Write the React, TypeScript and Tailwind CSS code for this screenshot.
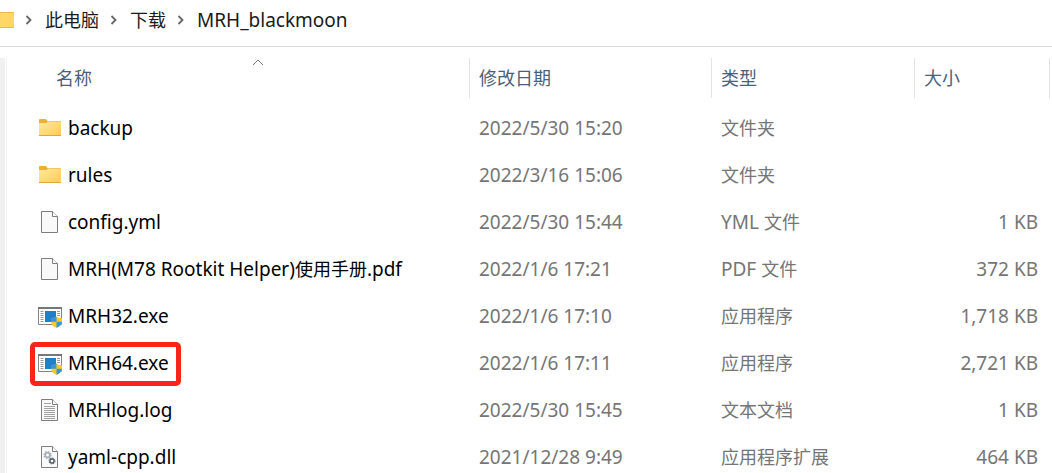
import { clsx } from "clsx"

type FileKind = "folder" | "file" | "app" | "text" | "dll"

interface FileEntry {
  name: string
  kind: FileKind
  modified: string
  type: string
  size?: string
  marked?: boolean
}

const breadcrumbs = ["此电脑", "下载", "MRH_blackmoon"]

const files: FileEntry[] = [
  { name: "backup", kind: "folder", modified: "2022/5/30 15:20", type: "文件夹" },
  { name: "rules", kind: "folder", modified: "2022/3/16 15:06", type: "文件夹" },
  { name: "config.yml", kind: "file", modified: "2022/5/30 15:44", type: "YML 文件", size: "1 KB" },
  { name: "MRH(M78 Rootkit Helper)使用手册.pdf", kind: "file", modified: "2022/1/6 17:21", type: "PDF 文件", size: "372 KB" },
  { name: "MRH32.exe", kind: "app", modified: "2022/1/6 17:10", type: "应用程序", size: "1,718 KB" },
  { name: "MRH64.exe", kind: "app", modified: "2022/1/6 17:11", type: "应用程序", size: "2,721 KB", marked: true },
  { name: "MRHlog.log", kind: "text", modified: "2022/5/30 15:45", type: "文本文档", size: "1 KB" },
  { name: "yaml-cpp.dll", kind: "dll", modified: "2021/12/28 9:49", type: "应用程序扩展", size: "464 KB" },
]

const columns = [
  { label: "名称", width: "", padding: "pl-12" },
  { label: "修改日期", width: "w-[242px]", padding: "pl-[9px]" },
  { label: "类型", width: "w-[203px]", padding: "pl-[9px]" },
  { label: "大小", width: "w-[135px]", padding: "pl-[9px]" },
]

// Chinese runs are set one step smaller than the Latin around them
function MixedText({ children }: { children: string }) {
  return (
    <>
      {children.split(/([\u4e00-\u9fff]+)/).map((part, index) =>
        index % 2 ? (
          <span key={index} className="text-[18px]">
            {part}
          </span>
        ) : (
          part
        )
      )}
    </>
  )
}

function FolderIcon() {
  return (
    <svg width="24" height="24" viewBox="0 0 24 24" aria-hidden="true">
      <defs>
        <linearGradient id="folder" x1="0" y1="0" x2="1" y2="1">
          <stop offset="0" stopColor="#ffe8a3" />
          <stop offset="1" stopColor="#ffcd50" />
        </linearGradient>
      </defs>
      <path d="M1 4a1 1 0 0 1 1-1h6l1.500 2H22a1 1 0 0 1 1 1v4H1z" fill="#eeb12b" />
      <path d="M1 7h7.500l1.500-1.500h13V19.500H1z" fill="url(#folder)" />
      <path d="M1 19h22v1H1z" fill="#dfa83c" />
    </svg>
  )
}

function PageIcon({ kind }: { kind: FileKind }) {
  return (
    <svg width="24" height="24" viewBox="0 0 24 24" fill="none" aria-hidden="true">
      <path d="M3.500 1.500h11l5 5v16h-16z" fill="#f9f9f9" stroke="#7d7d7d" />
      <path d="M14.500 1.500v5h5" fill="#fff" stroke="#7d7d7d" />
      {kind === "text" && (
        <path d="M6 5.500h7M6 8.500h11M6 10.500h11M6 12.500h11M6 14.500h11M6 16.500h11M6 18.500h11M6 20.500h11" stroke="#a2a2a2" />
      )}
      {kind === "dll" && (
        <>
          <circle cx="9.500" cy="10" r="3.400" stroke="#a3abb3" strokeWidth="1.400" strokeDasharray="1.500 1.170" />
          <circle cx="9.500" cy="10" r="2.300" stroke="#a3abb3" strokeWidth="1.500" />
          <circle cx="14" cy="16" r="2.900" stroke="#59626b" strokeWidth="1.200" strokeDasharray="1.300 0.978" />
          <circle cx="14" cy="16" r="2" stroke="#59626b" strokeWidth="1.300" />
        </>
      )}
    </svg>
  )
}

function AppIcon() {
  return (
    <svg width="24" height="24" viewBox="0 0 24 24" fill="none" aria-hidden="true">
      <path d="M0.500 3.500h23v17h-23z" fill="#fff" stroke="#858585" />
      <path d="M0 3h24v2H0z" fill="#777" />
      <path
        d="M2.500 7.500h3M2.500 9.500h3M2.500 11.500h3M2.500 13.500h3M2.500 15.500h3M2.500 17.500h3M19 7.500h3M19 9.500h3M19 11.500h3"
        stroke="#999"
      />
      <path d="M7 7h11v11H7z" fill="#1e7fcb" />
      <path d="M18.500 12.500c1.500 1.200 3 1.700 5.500 1.700v3.300c0 3-2 5-5.500 6.300-3.500-1.300-5.500-3.300-5.500-6.300v-3.300c2.500 0 4-.5 5.500-1.700z" fill="#ffc928" />
      <path d="M18.500 12.500v5.300H13v-3.600c2.500 0 4-.5 5.500-1.700zM18.500 17.800H24c-.2 2.800-2.200 4.800-5.500 6z" fill="#3a93dc" />
    </svg>
  )
}

function FileIcon({ kind }: { kind: FileKind }) {
  if (kind === "folder") return <FolderIcon />
  if (kind === "app") return <AppIcon />
  return <PageIcon kind={kind} />
}

function Breadcrumbs() {
  return (
    <nav aria-label="Path" className="flex h-[47px] shrink-0 items-center border-b border-[#d9d9d9] pb-1.5">
      <svg width="14" height="16" viewBox="0 0 14 16" aria-hidden="true">
        <path d="M0 1h14v14H0z" fill="#ffd766" />
        <path d="M0 0h14v1H0zM0 15h14v1H0z" fill="#e9b949" />
      </svg>
      <ol className="flex items-center text-[19px] text-[#1a1a1a]">
        {breadcrumbs.map((crumb) => (
          <li key={crumb} className="flex items-center">
            <svg width="8" height="10" viewBox="0 0 8 10" fill="none" className="mr-3 ml-[11px]" aria-hidden="true">
              <path d="M1.500 1l4 4-4 4" stroke="#666" strokeWidth="1.800" />
            </svg>
            <a href="#">
              <MixedText>{crumb}</MixedText>
            </a>
          </li>
        ))}
      </ol>
    </nav>
  )
}

export default function App() {
  return (
    <main className="flex h-screen flex-col overflow-hidden bg-white font-['Noto_Sans','Noto_Sans_CJK_SC',sans-serif] text-[19px] leading-6">
      <Breadcrumbs />
      <div className="flex min-h-0 flex-1">
        <div className="mt-[11px] mr-px flex w-[7px] shrink-0 justify-between border-r border-[#f0f0f0]">
          <div className="w-[5px] bg-[#f0f0f0]" />
        </div>
        <div className="min-w-0 flex-1 pr-0.5">
          <table className="w-full table-fixed border-collapse">
            <thead>
              <tr className="h-[58px]">
                {columns.map((column, index) => (
                  <th key={column.label} className={clsx("relative p-0 text-left font-normal", column.width)}>
                    <button
                      type="button"
                      className={clsx(
                        "mt-1 flex h-10 w-full items-center border-r border-[#e3e3e3] text-[18px] text-[#4c607a]",
                        column.padding
                      )}
                    >
                      {column.label}
                    </button>
                    {index === 0 && (
                      <svg
                        width="12"
                        height="7"
                        viewBox="0 0 12 7"
                        fill="none"
                        className="absolute top-3 left-1/2 ml-[13px]"
                        aria-hidden="true"
                      >
                        <path d="M1 6l5-5 5 5" stroke="#777" />
                      </svg>
                    )}
                  </th>
                ))}
              </tr>
            </thead>
            <tbody>
              {files.map((file) => (
                <tr key={file.name} className="h-[47px] text-[#757575]">
                  <td className="p-0 pl-[22px] text-black">
                    <div
                      className={clsx(
                        "flex h-11 w-fit items-center gap-1.5 rounded-[5px] border-[5px] pr-[7px] pb-0.5 pl-[3px] whitespace-nowrap",
                        file.marked ? "border-[#f9241a]" : "border-transparent"
                      )}
                    >
                      <FileIcon kind={file.kind} />
                      <span>
                        <MixedText>{file.name}</MixedText>
                      </span>
                    </div>
                  </td>
                  <td className="p-0 pb-0.5 pl-[9px] whitespace-nowrap">{file.modified}</td>
                  <td className="p-0 pb-0.5 pl-[9px] whitespace-nowrap">
                    <MixedText>{file.type}</MixedText>
                  </td>
                  <td className="p-0 pr-3 pb-0.5 text-right whitespace-nowrap">{file.size}</td>
                </tr>
              ))}
            </tbody>
          </table>
        </div>
      </div>
    </main>
  )
}
